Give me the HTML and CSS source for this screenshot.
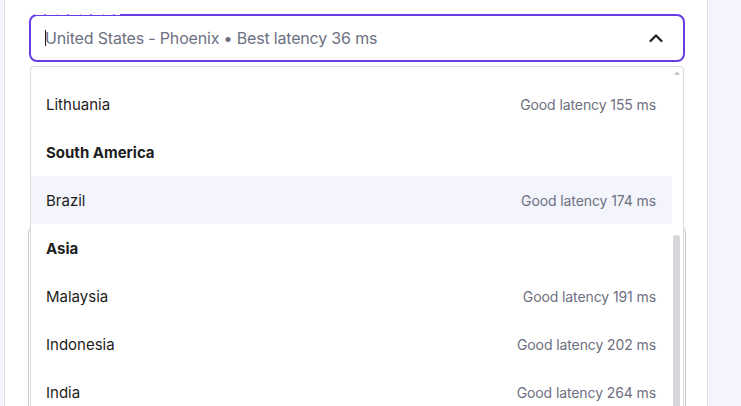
FILE: index.html
```html
<!DOCTYPE html>
<html lang="en">
<head>
<meta charset="utf-8">
<title>Server location</title>
<link rel="stylesheet" href="styles.css">
</head>
<body>
<div class="page">
  <aside class="side-left"></aside>
  <main class="main">
    <div class="field">
      <span class="notch"></span>
      <div class="select">
        <span class="caret"></span>
        <span class="value">United States - Phoenix • Best latency 36 ms</span>
        <svg class="chevron" width="16" height="16" viewBox="0 0 16 16"><path d="M2.5 11 L8 5.5 L13.5 11" fill="none" stroke="#1d1e20" stroke-width="2.2" stroke-linecap="round" stroke-linejoin="round"/></svg>
      </div>
      <div class="dropdown">
        <div class="list">
          <div class="row"><span class="name">Lithuania</span><span class="lat">Good latency 155 ms</span></div>
          <div class="row group">South America</div>
          <div class="row active"><span class="name">Brazil</span><span class="lat">Good latency 174 ms</span></div>
          <div class="row group">Asia</div>
          <div class="row"><span class="name">Malaysia</span><span class="lat">Good latency 191 ms</span></div>
          <div class="row"><span class="name">Indonesia</span><span class="lat">Good latency 202 ms</span></div>
          <div class="row"><span class="name">India</span><span class="lat">Good latency 264 ms</span></div>
        </div>
        <div class="scrollbar">
          <span class="arrow"></span>
          <span class="thumb"></span>
        </div>
      </div>
    </div>
    <div class="field2"></div>
  </main>
  <aside class="side-right"></aside>
</div>
</body>
</html>
```
FILE: styles.css
```css
* { box-sizing: border-box; }
html, body { margin: 0; padding: 0; height: 100%; overflow: hidden; }
body {
  font-family: "Inter", "DejaVu Sans", sans-serif;
  background: #fff;
  color: #1d1e20;
}
.page {
  display: flex;
  height: 406px;
  overflow: hidden;
}
.side-left {
  width: 5px;
  background: #f4f4fb;
  border-right: 1px solid #dcdce4;
}
.side-right {
  width: 34px;
  background: #f4f4fd;
  border-left: 1px solid #e2e2ec;
}
.main {
  flex: 1;
  padding: 14px 22px 0 24px;
  display: flex;
  flex-direction: column;
}
.field {
  position: relative;
  z-index: 2;
}
.notch {
  position: absolute;
  left: 6px;
  top: 0;
  width: 85px;
  height: 1px;
  background: repeating-linear-gradient(90deg, #fff 0 9px, #9a7df0 9px 11px, #fff 11px 22px, #b29ef3 22px 23px);
  z-index: 3;
}
.select {
  height: 48px;
  border: 2px solid #673de6;
  border-radius: 8px;
  display: flex;
  align-items: center;
  padding: 0 19px 0 14px;
  background: #fff;
}
.caret {
  width: 1px;
  height: 16px;
  background: #1d1e20;
  margin-right: -1px;
}
.value {
  flex: 1;
  font-size: 16px;
  color: #6d7081;
  letter-spacing: -0.18px;
}
.chevron { display: block; }
.dropdown {
  position: absolute;
  left: 1px;
  right: 1px;
  top: 52px;
  height: 340px;
  border: 1px solid #dadce0;
  border-bottom: none;
  border-radius: 4px 4px 0 0;
  background: #fff;
  overflow: hidden;
}
.list {
  padding-top: 13px;
  margin-right: 11px;
}
.row {
  height: 48px;
  display: flex;
  align-items: center;
  justify-content: space-between;
  padding: 0 16px 0 15px;
}
.row.active { background: #f4f4fd; }
.row.group {
  font-weight: 700;
  font-size: 15px;
}
.name { font-size: 15px; color: #1d1e20; }
.lat { font-size: 14px; color: #6d7081; letter-spacing: -0.1px; }
.scrollbar {
  position: absolute;
  top: 0;
  right: 2px;
  width: 8px;
  bottom: 0;
}
.arrow {
  position: absolute;
  top: 4px;
  left: 1px;
  width: 0;
  height: 0;
  border-left: 3px solid transparent;
  border-right: 3px solid transparent;
  border-bottom: 4px solid #c8c8cc;
}
.thumb {
  position: absolute;
  top: 168px;
  left: 0;
  width: 7px;
  bottom: 0;
  border-radius: 3px 3px 0 0;
  background: #d6d6db;
}
.field2 {
  margin-top: 163px;
  height: 181px;
  flex-shrink: 0;
  margin-left: -1px;
  margin-right: -1px;
  border: 1px solid #c9c9d1;
  border-bottom: none;
  border-radius: 8px 8px 0 0;
  z-index: 1;
}
```
